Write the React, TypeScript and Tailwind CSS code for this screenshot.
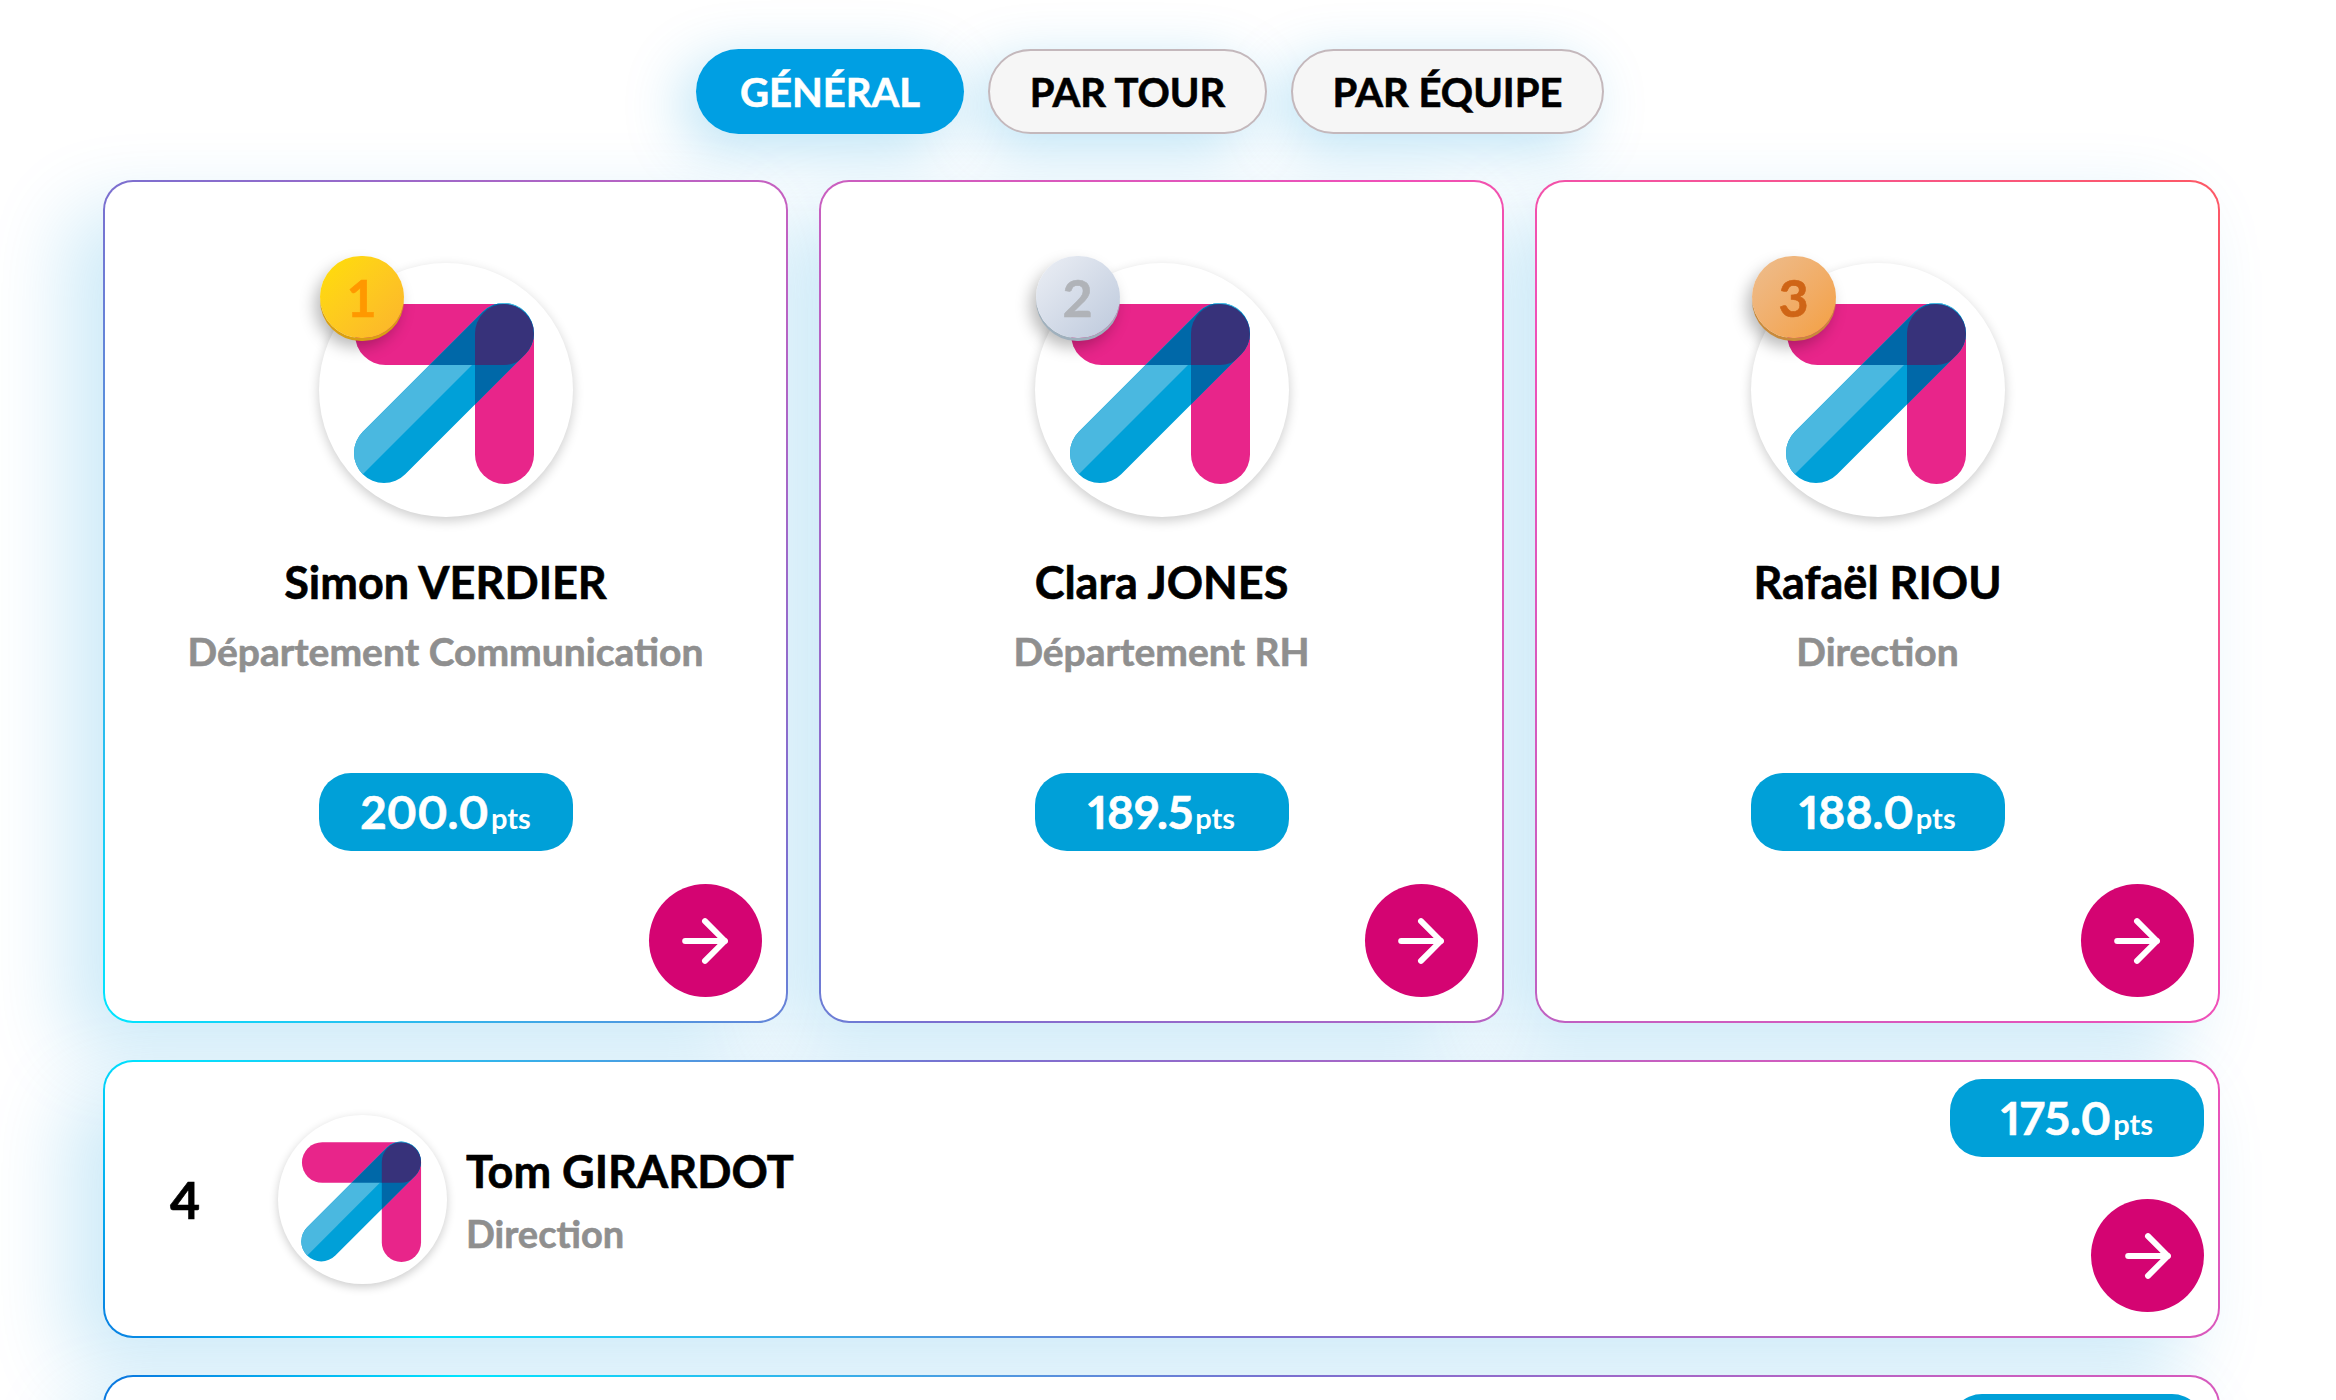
import { ArrowRight } from "lucide-react";

const cardBg =
  "border-2 border-transparent [background:linear-gradient(#fff,#fff)_padding-box,linear-gradient(45deg,#0a7ae0_4%,#00e5ff_13%,#7a70d0_35%,#c85fc0_54%,#f050b8_70%,#ff5a5a_95%)_border-box_fixed] before:absolute before:-inset-[2px] before:-z-10 before:rounded-[30px] before:shadow-[-35px_30px_80px_rgba(0,150,220,0.2)] before:content-['']";

const tabBase =
  "relative flex h-[85px] items-center justify-center rounded-full before:absolute before:inset-0 before:-z-10 before:rounded-full before:shadow-[-14px_14px_60px_rgba(0,150,220,0.28)] before:content-['']";

const heavy = "[-webkit-text-stroke:0.6px_currentColor]";

function Logo() {
  return (
    <svg viewBox="0 0 254 254" className="block h-full w-full blur-[0.5px]">
      <defs>
        <clipPath id="logo-h">
          <rect x="36" y="41" width="179" height="61" rx="30.5" />
        </clipPath>
        <clipPath id="logo-v">
          <rect x="156" y="41" width="59" height="180" rx="29.5" />
        </clipPath>
        <clipPath id="logo-hv">
          <rect x="36" y="41" width="179" height="61" rx="30.5" />
          <rect x="156" y="41" width="59" height="180" rx="29.5" />
        </clipPath>
        <clipPath id="logo-half">
          <polygon points="0,0 255,0 0,255" />
        </clipPath>
      </defs>
      <rect x="36" y="41" width="179" height="61" rx="30.5" fill="#e8258a" />
      <rect x="156" y="41" width="59" height="180" rx="29.5" fill="#e8258a" />
      <line x1="65" y1="190" x2="185" y2="70" stroke="#00a0d8" strokeWidth="60" strokeLinecap="round" />
      <g clipPath="url(#logo-half)">
        <line x1="65" y1="190" x2="185" y2="70" stroke="#4ab8e0" strokeWidth="60" strokeLinecap="round" />
      </g>
      <g clipPath="url(#logo-hv)">
        <line x1="65" y1="190" x2="185" y2="70" stroke="#0068a8" strokeWidth="60" strokeLinecap="round" />
      </g>
      <g clipPath="url(#logo-h)">
        <g clipPath="url(#logo-v)">
          <line x1="65" y1="190" x2="185" y2="70" stroke="#37327a" strokeWidth="60" strokeLinecap="round" />
        </g>
      </g>
    </svg>
  );
}

function Go({ className }: { className: string }) {
  return (
    <div className={"absolute flex h-[113px] w-[113px] items-center justify-center rounded-full bg-[#d40472] text-white " + className}>
      <ArrowRight size={68} strokeWidth={2.1} />
    </div>
  );
}

function Score({ value, className = "" }: { value: string; className?: string }) {
  return (
    <div className={"flex h-[78px] w-[254px] items-center justify-center rounded-[32px] bg-[#00a0d8] font-bold text-white " + className}>
      <span className={"text-[46px] leading-none proportional-nums " + heavy}>{value}</span>
      <span className="ml-[2px] mt-[10px] text-[29px] leading-none">pts</span>
    </div>
  );
}

const medals = [
  "bg-gradient-to-br from-[#ffdf00] to-[#fbb32c] text-[#ff9800] shadow-[0_3px_0_#d99f12,-5px_9px_16px_rgba(0,0,0,0.28)]",
  "bg-gradient-to-br from-[#eceff5] to-[#bdc9dc] text-[#b0b3b8] shadow-[0_3px_0_#9fb0bd,-5px_9px_16px_rgba(0,0,0,0.28)]",
  "bg-gradient-to-br from-[#edbd8e] to-[#f49f3e] text-[#cf6516] shadow-[0_3px_0_#c98a3a,-5px_9px_16px_rgba(0,0,0,0.28)]",
];

const podium = [
  { name: "Simon VERDIER", dept: "Département Communication", pts: "200.0" },
  { name: "Clara JONES", dept: "Département RH", pts: "189.5" },
  { name: "Rafaël RIOU", dept: "Direction", pts: "188.0" },
];

export default function App() {
  return (
    <div className="isolate h-[1400px] overflow-hidden bg-white pl-[103px] pr-[116px] pt-[49px] font-['Lato','Liberation_Sans',sans-serif] text-black">
      <div className={"ml-[593px] flex gap-[24px] text-[40px] font-bold leading-none " + heavy}>
        <div className={tabBase + " w-[268px] bg-[#009fe3] text-white"}>GÉNÉRAL</div>
        <div className={tabBase + " w-[279px] border-2 border-[#c4b8bc] bg-[#f6f6f6]"}>PAR TOUR</div>
        <div className={tabBase + " w-[313px] border-2 border-[#c4b8bc] bg-[#f6f6f6]"}>PAR ÉQUIPE</div>
      </div>

      <div className="mt-[46px] grid grid-cols-3 gap-[31px]">
        {podium.map((p, i) => (
          <div key={p.name} className={"relative flex h-[843px] flex-col items-center rounded-[30px] pt-[81px] " + cardBg}>
            <div className="relative h-[254px] w-[254px] rounded-full bg-white shadow-[0_4px_12px_rgba(0,0,0,0.2)]">
              <Logo />
              <div className={"absolute left-[1px] top-[-7px] flex h-[82px] w-[84px] items-center justify-center rounded-full text-[52px] font-bold leading-none " + medals[i] + " " + heavy}>
                {i + 1}
              </div>
            </div>
            <div className={"mt-[37px] text-[45px] font-bold leading-[56px] " + heavy}>{p.name}</div>
            <div className={"mt-[13px] text-[39px] font-bold leading-[56px] text-[#8f8f8f] " + heavy}>{p.dept}</div>
            <Score value={p.pts} className="mt-[94px]" />
            <Go className="bottom-[24px] right-[24.5px]" />
          </div>
        ))}
      </div>

      <div className={"relative mt-[37px] flex h-[278px] items-center rounded-[30px] " + cardBg}>
        <div className={"mr-[13px] w-[160px] text-center text-[52px] font-bold leading-none " + heavy}>4</div>
        <div className="h-[169px] w-[169px] shrink-0 rounded-full bg-white shadow-[0_3px_10px_rgba(0,0,0,0.2)]">
          <Logo />
        </div>
        <div className="ml-[19px] mt-[6px]">
          <div className={"text-[45px] font-bold leading-[56px] " + heavy}>Tom GIRARDOT</div>
          <div className={"mt-[6px] text-[38px] font-bold leading-[56px] text-[#8f8f8f] " + heavy}>Direction</div>
        </div>
        <Score value="175.0" className="absolute right-[14px] top-[17px]" />
        <Go className="bottom-[24px] right-[14px]" />
      </div>

      <div className={"relative mt-[37px] h-[278px] rounded-[30px] " + cardBg}>
        <div className="absolute right-[14px] top-[17px] h-[78px] w-[254px] rounded-[32px] bg-[#00a0d8]" />
      </div>
    </div>
  );
}
